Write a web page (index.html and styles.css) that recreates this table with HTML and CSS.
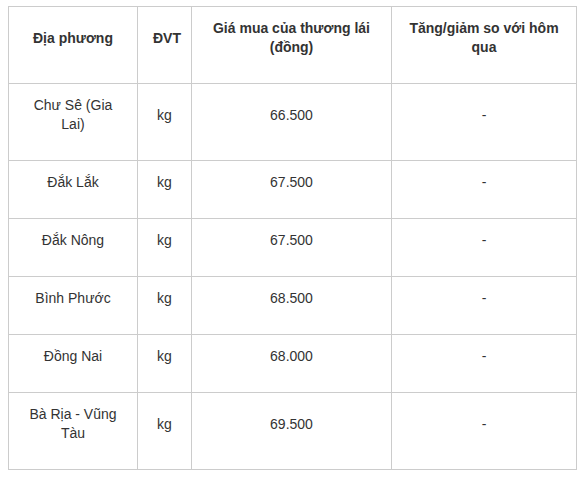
FILE: index.html
```html
<!DOCTYPE html>
<html lang="vi">
<head>
<meta charset="utf-8">
<link rel="stylesheet" href="styles.css">
</head>
<body>
<table class="price-table">
  <colgroup>
    <col class="c1"><col class="c2"><col class="c3"><col class="c4">
  </colgroup>
  <thead>
    <tr>
      <th>Địa phương</th>
      <th>ĐVT</th>
      <th>Giá mua của thương lái (đồng)</th>
      <th>Tăng/giảm so với hôm qua</th>
    </tr>
  </thead>
  <tbody>
    <tr><td>Chư Sê (Gia Lai)</td><td>kg</td><td>66.500</td><td>-</td></tr>
    <tr><td>Đắk Lắk</td><td>kg</td><td>67.500</td><td>-</td></tr>
    <tr><td>Đắk Nông</td><td>kg</td><td>67.500</td><td>-</td></tr>
    <tr><td>Bình Phước</td><td>kg</td><td>68.500</td><td>-</td></tr>
    <tr><td>Đồng Nai</td><td>kg</td><td>68.000</td><td>-</td></tr>
    <tr><td>Bà Rịa - Vũng Tàu</td><td>kg</td><td>69.500</td><td>-</td></tr>
  </tbody>
</table>
</body>
</html>
```
FILE: styles.css
```css
html, body {
  margin: 0;
  padding: 0;
  background: #fff;
}
body {
  font-family: "Liberation Sans", Arial, sans-serif;
  font-size: 14px;
  line-height: 19px;
  color: #333;
}
.price-table {
  margin: 6px 0 0 8px;
  width: 568px;
  table-layout: fixed;
  border-collapse: collapse;
}
.c1 { width: 129px; }
.c2 { width: 54px; }
.c3 { width: 200px; }
.c4 { width: 185px; }
.price-table th,
.price-table td {
  border: 1px solid #cccccc;
  padding: 12px 15px 26px;
  text-align: center;
  vertical-align: middle;
}
.price-table th {
  font-weight: bold;
  color: #333;
}
```
